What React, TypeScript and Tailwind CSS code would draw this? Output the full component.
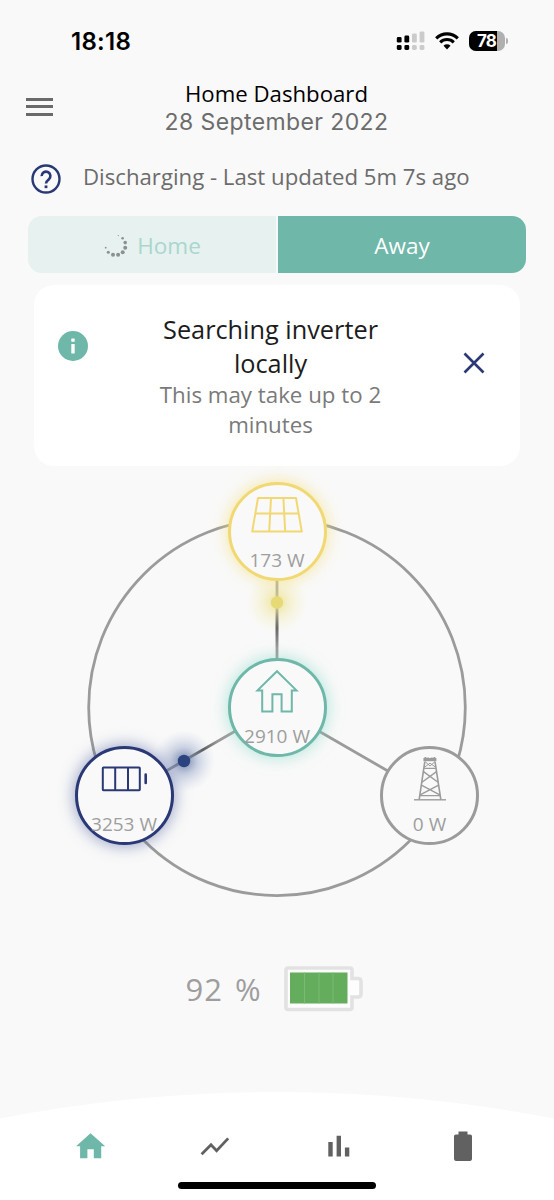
import type { ReactNode } from "react";
import { clsx } from "clsx";

/* ---------- status bar ---------- */

function SignalIcon() {
  return (
    <svg width="29" height="20" viewBox="0 0 29 20">
      <g fill="#000">
        <rect x="0.8" y="6" width="4.8" height="5.6" rx="1.4" />
        <rect x="8.4" y="4.6" width="4.8" height="7" rx="1.4" />
        <rect x="0.8" y="14" width="4.8" height="5" rx="1.4" />
        <rect x="8.4" y="14" width="4.8" height="5" rx="1.4" />
      </g>
      <g fill="#cbcbcb">
        <rect x="16" y="2.6" width="4.8" height="9" rx="1.4" />
        <rect x="23.6" y="0.4" width="4.8" height="11.2" rx="1.4" />
        <rect x="16" y="14" width="4.8" height="5" rx="1.4" />
        <rect x="23.6" y="14" width="4.8" height="5" rx="1.4" />
      </g>
    </svg>
  );
}

function WifiIcon() {
  return (
    <svg width="24" height="18" viewBox="0 0 24 18">
      <g fill="none" stroke="#000" strokeWidth="3.1">
        <path d="M1.2 6.3a15.4 15.4 0 0 1 21.6 0" />
        <path d="M5.2 10.3a9.8 9.8 0 0 1 13.6 0" />
      </g>
      <path d="M8.5 13.7a5 5 0 0 1 7 0L12 17.4z" fill="#000" />
    </svg>
  );
}

function PhoneBattery() {
  return (
    <div className="flex items-center gap-px">
      <div className="flex h-[20px] w-[36px] items-center overflow-hidden rounded-[7px] bg-[#b0b0b0]">
        <div className="flex h-full w-[28px] items-center justify-end bg-black pr-px font-['Inter'] text-[17px] leading-none font-bold tracking-[-0.8px] text-white">
          78
        </div>
      </div>
      <div className="h-[6px] w-[2px] rounded-r-full bg-[#b0b0b0]" />
    </div>
  );
}

/* ---------- small icons ---------- */

function HelpIcon() {
  return (
    <svg width="30" height="30" viewBox="0 0 30 30" fill="none" stroke="#2a3876">
      <circle cx="15" cy="15" r="13.5" strokeWidth="2.4" />
      <path d="M10.6 12.1a4.4 4.4 0 1 1 7.2 3.3c-1.8 1.4-2.8 2-2.8 4.1" strokeWidth="2.6" />
      <path d="M13.6 22.8h2.8" strokeWidth="2.7" />
    </svg>
  );
}

function Spinner() {
  const dots = [
    [14.3, 1.6, 0.6],
    [18.6, 4.2, 1.3],
    [21.2, 8.6, 1.8],
    [21.2, 13.7, 2],
    [18.7, 18.2, 2],
    [14.1, 20.8, 2],
    [9, 20.8, 2],
    [4.3, 18.2, 1.5],
    [1.7, 13.7, 0.9],
  ];
  return (
    <svg width="24" height="24" viewBox="0 0 24 24" fill="#8a9190">
      {dots.map(([cx, cy, r]) => (
        <circle key={`${cx}-${cy}`} cx={cx} cy={cy} r={r} />
      ))}
    </svg>
  );
}

function InfoIcon() {
  return (
    <svg width="30" height="30" viewBox="0 0 30 30">
      <circle cx="15" cy="15" r="15" fill="#6eb7a9" />
      <rect x="13.3" y="7.6" width="3.4" height="3.2" rx="0.6" fill="#fff" />
      <rect x="13.3" y="13" width="3.4" height="9.6" rx="0.6" fill="#fff" />
    </svg>
  );
}

function SolarIcon() {
  return (
    <svg width="52" height="36" viewBox="0 0 52 36" fill="none" stroke="#f2d873" strokeWidth="2" strokeLinejoin="round">
      <path d="M7 1h38l5.8 33.6H1.2z" />
      <path d="M4.2 16.5h43.6M20 1l-1.8 33.6M32.4 1l1.8 33.6" />
    </svg>
  );
}

function HouseIcon() {
  return (
    <svg width="44" height="44" viewBox="0 0 44 44" fill="none" stroke="#6eb7a9" strokeWidth="2">
      <path d="M22 2.2 41.5 21.4h-4.7v21.2H26.6V25.2h-9.2v17.4H7.2V21.4H2.5z" />
    </svg>
  );
}

function CellsIcon() {
  return (
    <svg width="47" height="26" viewBox="0 0 47 26" fill="none" stroke="#2a3876" strokeWidth="2">
      <rect x="1.8" y="1.6" width="37" height="22.6" rx="0.6" />
      <path d="M14.2 1.6v22.6M27 1.6v22.6" />
      <path d="M44.7 8.6v8.4" strokeWidth="2.6" strokeLinecap="round" />
    </svg>
  );
}

function PylonIcon() {
  return (
    <svg width="34" height="46" viewBox="0 0 34 46" fill="none" stroke="#9b9b9b">
      <path d="M1 43.8h32" strokeWidth="1.4" />
      <path d="M11.8 5.6 6.2 43.4M22 5.6l5.8 37.8" strokeWidth="1.6" />
      <path d="M10.4 3.6h13" strokeWidth="3.2" />
      <path d="M12.4 1v2M15.2 1.6v1M18.8 1.6v1M21.4 1v2" strokeWidth="1.8" />
      <path d="M12 5.6l5 4.4 5-4.4M11.2 11.4l5.8-4.2 5.8 4.2" strokeWidth="1" />
      <path
        d="M11.2 12.4h11.6M10.5 15.6l14.5 10.6M23.5 15.6 9 26.2M8.4 29.2l18.4 9.6M25.6 29.2 7.2 38.8M7 39.6h20"
        strokeWidth="1.4"
      />
    </svg>
  );
}

/* ---------- energy flow ---------- */

interface EnergyNodeProps {
  icon: ReactNode;
  label: string;
  className: string;
}

function EnergyNode({ icon, label, className }: EnergyNodeProps) {
  return (
    <div
      className={clsx(
        "absolute flex size-[99px] flex-col items-center rounded-full border-[3px] bg-[#f9f9f9]",
        className,
      )}
    >
      <div className="flex h-[61px] shrink-0 items-center">{icon}</div>
      <span className="text-[19px] leading-[28px] whitespace-nowrap text-[#9e9e9e]">{label}</span>
    </div>
  );
}

function EnergyFlow() {
  return (
    <div className="relative h-[434px] shrink-0">
      <svg className="absolute inset-0" width="554" height="434" viewBox="0 0 554 434">
        <defs>
          <radialGradient id="sunGlow">
            <stop offset="0" stopColor="#e8dc78" stopOpacity="0.75" />
            <stop offset="0.45" stopColor="#efe38f" stopOpacity="0.35" />
            <stop offset="1" stopColor="#f5eeb4" stopOpacity="0" />
          </radialGradient>
          <radialGradient id="cellGlow">
            <stop offset="0" stopColor="#2f4a86" stopOpacity="0.7" />
            <stop offset="0.45" stopColor="#5f76ab" stopOpacity="0.3" />
            <stop offset="1" stopColor="#9fb0d4" stopOpacity="0" />
          </radialGradient>
          <linearGradient id="sunPulse" gradientUnits="userSpaceOnUse" x1="277" y1="142" x2="277" y2="182">
            <stop offset="0" stopColor="#555" stopOpacity="0" />
            <stop offset="0.5" stopColor="#555" stopOpacity="0.75" />
            <stop offset="1" stopColor="#555" stopOpacity="0" />
          </linearGradient>
          <linearGradient id="cellPulse" gradientUnits="userSpaceOnUse" x1="188" y1="292.400" x2="218" y2="275">
            <stop offset="0" stopColor="#444" stopOpacity="0" />
            <stop offset="0.5" stopColor="#444" stopOpacity="0.7" />
            <stop offset="1" stopColor="#444" stopOpacity="0" />
          </linearGradient>
        </defs>
        <g fill="none" stroke="#9b9b9b" strokeWidth="2.8">
          <circle cx="277" cy="241.3" r="188.3" />
          <path d="M277 110v90M277 241l-152.5 88M277 241l152.5 88" />
        </g>
        <circle cx="277" cy="136.5" r="31" fill="url(#sunGlow)" />
        <path d="M277 142l0.01 40" stroke="url(#sunPulse)" strokeWidth="2.8" />
        <circle cx="277" cy="136.5" r="6.2" fill="#e6da76" />
        <circle cx="184" cy="295" r="31" fill="url(#cellGlow)" />
        <path d="M188 292.4 218 275" stroke="url(#cellPulse)" strokeWidth="2.4" />
        <circle cx="184" cy="295" r="6.2" fill="#2b4480" />
      </svg>

      <EnergyNode
        icon={<SolarIcon />}
        label="173 W"
        className="top-[15.5px] left-[227.5px] border-[#f2d873] shadow-[0_0_15px_1px_rgba(244,222,120,0.65)]"
      />
      <EnergyNode
        icon={<HouseIcon />}
        label="2910 W"
        className="top-[191.5px] left-[227.5px] border-[#6eb7a9] shadow-[0_0_15px_1px_rgba(120,215,195,0.55)]"
      />
      <EnergyNode
        icon={<CellsIcon />}
        label="3253 W"
        className="top-[279.5px] left-[74.5px] border-[#2a3876] shadow-[0_0_15px_1px_rgba(60,80,150,0.5)]"
      />
      <EnergyNode icon={<PylonIcon />} label="0 W" className="top-[279.5px] left-[380px] border-[#9b9b9b]" />
    </div>
  );
}

function ChargeLevel() {
  return (
    <div className="mt-[64px] flex h-[50px] shrink-0 items-center pl-[185.5px]">
      <span className="w-[98.500px] pt-px text-[31px] leading-none tracking-[1px] whitespace-nowrap text-[#9e9e9e] [word-spacing:3px]">
        92 %
      </span>
      <svg width="80" height="46" viewBox="0 0 80 46">
        <path
          d="M3 2h63q2 0 2 2v8.5h6q3 0 3 3v12.5q0 3-3 3h-6v10.5q0 2-2 2H4q-2 0-2-2V4q0-2 2-2z"
          fill="#fdfdfd"
          stroke="#e2e2e2"
          strokeWidth="3.6"
        />
        <rect x="6" y="6.5" width="57.5" height="31" fill="#64ad5c" />
        <path d="M20.5 6.5v31M35 6.5v31M49 6.5v31" stroke="#7cba74" strokeWidth="1" />
      </svg>
    </div>
  );
}

/* ---------- bottom nav ---------- */

function BottomNav() {
  return (
    <nav className="relative mt-auto h-[108px] shrink-0 overflow-hidden">
      {/* one huge circle gives the shallow arc on top of the bar */}
      <div className="absolute top-0 left-1/2 size-[2922px] -translate-x-1/2 rounded-full bg-white" />
      <div className="relative flex h-full flex-col items-center">
        <div className="grid w-[497px] grid-cols-4 place-items-center pt-[38px]">
          <svg width="32" height="32" viewBox="0 0 32 32" fill="#6eb7a9">
            <path d="M15.5 3.2 30.2 16.2h-4V28.2h-7.4v-9h-6.4v9H5.1V16.2H1.1z" />
          </svg>
          <svg width="32" height="32" viewBox="0 0 32 32" fill="none" stroke="#616161" strokeWidth="2.8">
            <path d="M2.6 24.2 12 14.8l5.6 6L29.2 8.4" />
          </svg>
          <svg width="32" height="32" viewBox="0 0 32 32" fill="#616161">
            <path d="M5.3 12h4.4v14.6H5.3zM13.6 5.8H18v20.8h-4.4zM21.9 17.5h4.4v9.1h-4.4z" />
          </svg>
          <svg width="32" height="32" viewBox="0 0 32 32" fill="#616161">
            <path d="M11.5 1.4h9v3h2.7q1.8 0 1.8 1.8v22.9q0 1.8-1.8 1.8H8.8Q7 30.9 7 29.1V6.200q0-1.8 1.8-1.8h2.7z" />
          </svg>
        </div>
        <div className="mt-[20px] h-[7px] w-[198px] rounded-full bg-black" />
      </div>
    </nav>
  );
}

export default function App() {
  return (
    <div className="flex h-[1200px] w-[554px] flex-col overflow-hidden bg-[#f9f9f9] font-['Open_Sans','Noto_Sans',sans-serif]">
      <div className="flex h-[82px] shrink-0 items-center pr-[46px] pl-[71px]">
        <span className="pt-px font-['Inter'] text-[24px] leading-none font-semibold tracking-[0.3px] text-black">
          18:18
        </span>
        <div className="ml-auto flex items-center gap-[10px]">
          <SignalIcon />
          <WifiIcon />
          <PhoneBattery />
        </div>
      </div>

      <header className="grid h-[58px] shrink-0 grid-cols-[80px_1fr_80px]">
        <button className="flex flex-col gap-[4.5px] pt-[15.5px] pl-[26px]" aria-label="Menu">
          <span className="h-[3px] w-[27px] bg-[#6a6a6a]" />
          <span className="h-[3px] w-[27px] bg-[#6a6a6a]" />
          <span className="h-[3px] w-[27px] bg-[#6a6a6a]" />
        </button>
        <div className="-mt-px -ml-px text-center whitespace-nowrap">
          <h1 className="text-[22.2px] leading-[26px] text-black">Home Dashboard</h1>
          <p className="pt-px font-['Inter'] text-[23px] leading-[28px] tracking-[0.4px] text-[#6c6c6c]">
            28 September 2022
          </p>
        </div>
      </header>

      <div className="mt-[20px] flex h-[38px] shrink-0 items-center pl-[31px]">
        <HelpIcon />
        <span className="-mt-[5px] ml-[22px] text-[22.2px] leading-[30px] whitespace-nowrap text-[#6c6c6c]">
          Discharging - Last updated 5m 7s ago
        </span>
      </div>

      <div className="mx-[28px] mt-[18px] grid h-[57px] shrink-0 grid-cols-[248px_1fr] gap-[2px] text-[22.5px]">
        <button className="flex items-center justify-center gap-[9px] rounded-l-[14px] bg-[#e7f1ef] pt-[2px] pl-px text-[#a9d7cd]">
          <Spinner />
          Home
        </button>
        <button className="rounded-r-[14px] bg-[#6eb7a9] pt-[3px] text-white">Away</button>
      </div>

      <section className="mx-[34px] mt-[12px] grid h-[181px] shrink-0 grid-cols-[114px_245px_1fr] rounded-[20px] bg-white">
        <div className="pt-[46px] pl-[24px]">
          <InfoIcon />
        </div>
        <div className="pt-[27px] text-center">
          <h2 className="text-[25.3px] leading-[34px] text-[#1c1c1c]">Searching inverter locally</h2>
          <p className="text-[22.3px] leading-[30px] text-[#7a7a7a]">This may take up to 2 minutes</p>
        </div>
        <button className="flex items-start pt-[67px] pl-[70px]" aria-label="Close">
          <svg width="22" height="22" viewBox="0 0 22 22" stroke="#2a3876" strokeWidth="2.6">
            <path d="M1.5 1.5 20.5 20.5M20.5 1.5 1.5 20.5" />
          </svg>
        </button>
      </section>

      <EnergyFlow />
      <ChargeLevel />
      <BottomNav />
    </div>
  );
}
